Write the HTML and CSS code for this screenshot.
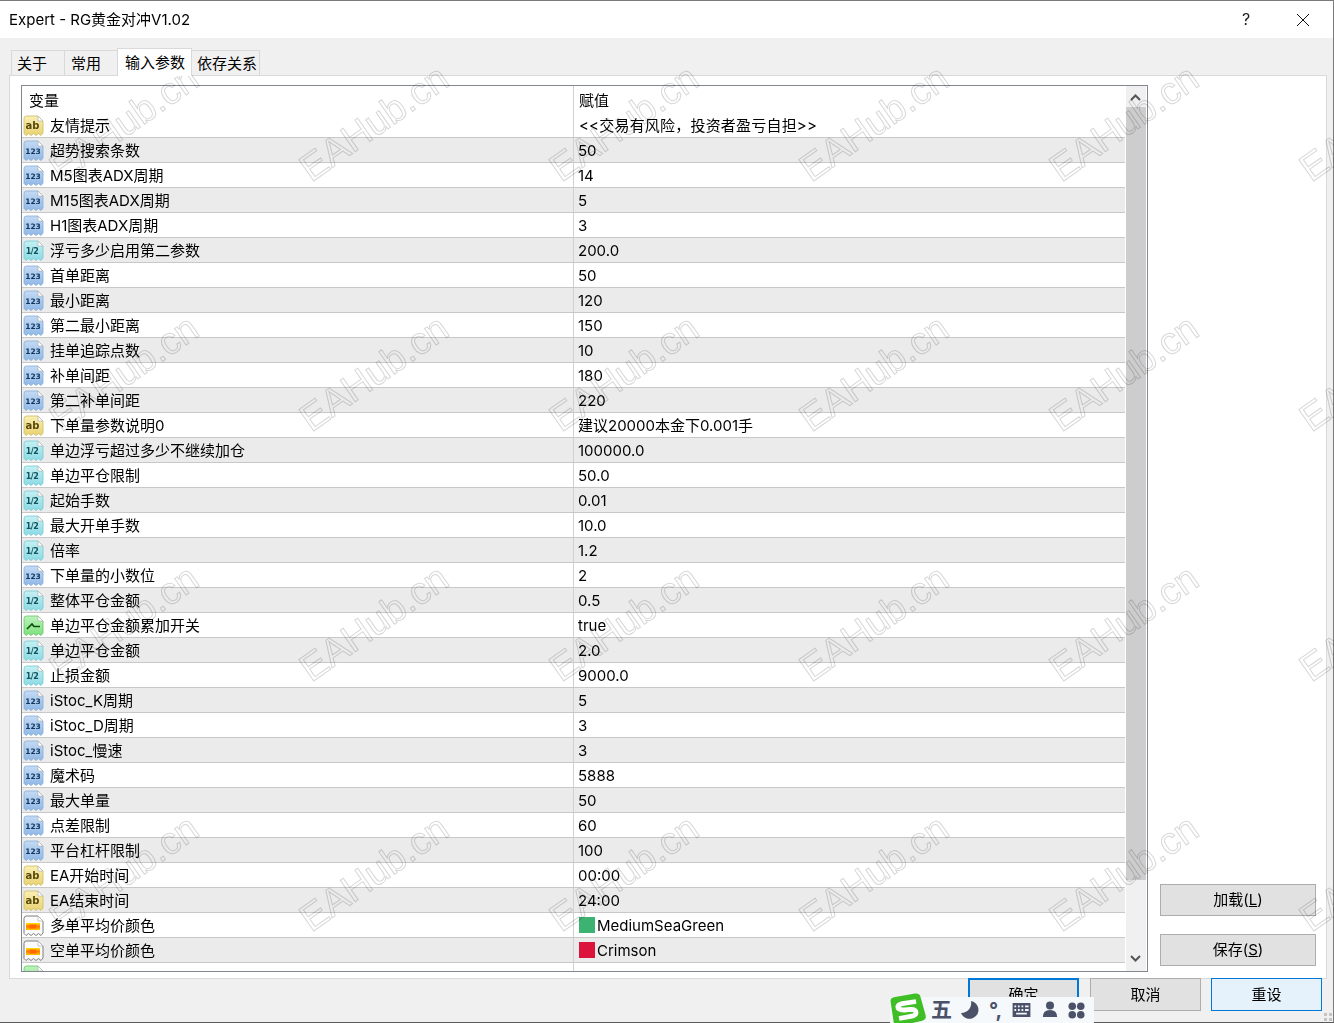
FILE: index.html
```html
<!DOCTYPE html>
<html lang="zh">
<head>
<meta charset="utf-8">
<title>Expert - RG黄金对冲V1.02</title>
<link rel="stylesheet" href="styles.css">
</head>
<body>
<svg class="defs" width="0" height="0" aria-hidden="true">
  <defs>
    <linearGradient id="g-ab" x1="0" y1="0" x2="0" y2="1"><stop offset="0" stop-color="#faf0b4"/><stop offset="1" stop-color="#e9d274"/></linearGradient>
    <linearGradient id="g-int" x1="0" y1="0" x2="0" y2="1"><stop offset="0" stop-color="#c4dbf5"/><stop offset="1" stop-color="#8fb8e6"/></linearGradient>
    <linearGradient id="g-dbl" x1="0" y1="0" x2="0" y2="1"><stop offset="0" stop-color="#c6f0f3"/><stop offset="1" stop-color="#8adbe4"/></linearGradient>
    <linearGradient id="g-bool" x1="0" y1="0" x2="0" y2="1"><stop offset="0" stop-color="#bdf3bd"/><stop offset="1" stop-color="#7ce07c"/></linearGradient>
    <linearGradient id="g-col" x1="0" y1="0" x2="0" y2="1"><stop offset="0" stop-color="#ffe600"/><stop offset=".5" stop-color="#ff7a00"/><stop offset="1" stop-color="#ffc800"/></linearGradient>
    <path id="doc" d="M1 4.5Q1 2 3.5 2H15L20 7V19L18 21.5 15.5 19.5 13 21.5 10.5 19.5 8 21.5 5.5 19.5 3 21.5 1 19.5Z"/>
    <symbol id="i-ab" viewBox="0 0 21 22"><use href="#doc" class="ic-ab"/><path d="M15 2V7H20Z" class="ic-fold"/><text x="9.5" y="14.5" class="ic-t ic-t-ab">ab</text></symbol>
    <symbol id="i-int" viewBox="0 0 21 22"><use href="#doc" class="ic-int"/><path d="M15 2V7H20Z" class="ic-fold"/><text x="10" y="14.5" class="ic-t ic-t-int">123</text></symbol>
    <symbol id="i-dbl" viewBox="0 0 21 22"><use href="#doc" class="ic-dbl"/><path d="M15 2V7H20Z" class="ic-fold"/><text x="9" y="14.5" class="ic-t ic-t-dbl">1/2</text></symbol>
    <symbol id="i-bool" viewBox="0 0 21 22"><use href="#doc" class="ic-bool"/><path d="M15 2V7H20Z" class="ic-fold"/><path d="M4 15 9 10 11 12.5 13 12.5H17" class="ic-line"/></symbol>
    <symbol id="i-col" viewBox="0 0 21 22"><use href="#doc" class="ic-col"/><path d="M15 2V7H20Z" class="ic-fold"/><rect x="3" y="9" width="14" height="7" class="ic-swatch"/><rect x="6.5" y="10.5" width="7" height="4" class="ic-swatch-in"/></symbol>
  </defs>
</svg>
<div class="window">
  <header class="titlebar">
    <span class="title">Expert - RG黄金对冲V1.02</span>
    <span class="help">?</span>
    <svg class="close" width="14" height="14" viewBox="0 0 14 14"><path d="M1 1 13 13M13 1 1 13"/></svg>
  </header>
  <nav class="tabs">
    <span class="tab tab-first">关于</span>
    <span class="tab tab-second">常用</span>
    <span class="tab tab-active">输入参数</span>
    <span class="tab tab-last">依存关系</span>
  </nav>
  <main class="panel">
    <section class="grid">
      <div class="list">
        <div class="head"><span class="col-name">变量</span><span class="col-val">赋值</span></div>
        <div class="row"><span class="col-name"><svg class="icon"><use href="#i-ab"/></svg>友情提示</span><span class="col-val col-text">&lt;&lt;交易有风险，投资者盈亏自担&gt;&gt;</span></div>
        <div class="row alt"><span class="col-name"><svg class="icon"><use href="#i-int"/></svg>超势搜索条数</span><span class="col-val">50</span></div>
        <div class="row"><span class="col-name"><svg class="icon"><use href="#i-int"/></svg>M5图表ADX周期</span><span class="col-val">14</span></div>
        <div class="row alt"><span class="col-name"><svg class="icon"><use href="#i-int"/></svg>M15图表ADX周期</span><span class="col-val">5</span></div>
        <div class="row"><span class="col-name"><svg class="icon"><use href="#i-int"/></svg>H1图表ADX周期</span><span class="col-val">3</span></div>
        <div class="row alt"><span class="col-name"><svg class="icon"><use href="#i-dbl"/></svg>浮亏多少启用第二参数</span><span class="col-val">200.0</span></div>
        <div class="row"><span class="col-name"><svg class="icon"><use href="#i-int"/></svg>首单距离</span><span class="col-val">50</span></div>
        <div class="row alt"><span class="col-name"><svg class="icon"><use href="#i-int"/></svg>最小距离</span><span class="col-val">120</span></div>
        <div class="row"><span class="col-name"><svg class="icon"><use href="#i-int"/></svg>第二最小距离</span><span class="col-val">150</span></div>
        <div class="row alt"><span class="col-name"><svg class="icon"><use href="#i-int"/></svg>挂单追踪点数</span><span class="col-val">10</span></div>
        <div class="row"><span class="col-name"><svg class="icon"><use href="#i-int"/></svg>补单间距</span><span class="col-val">180</span></div>
        <div class="row alt"><span class="col-name"><svg class="icon"><use href="#i-int"/></svg>第二补单间距</span><span class="col-val">220</span></div>
        <div class="row"><span class="col-name"><svg class="icon"><use href="#i-ab"/></svg>下单量参数说明0</span><span class="col-val">建议20000本金下0.001手</span></div>
        <div class="row alt"><span class="col-name"><svg class="icon"><use href="#i-dbl"/></svg>单边浮亏超过多少不继续加仓</span><span class="col-val">100000.0</span></div>
        <div class="row"><span class="col-name"><svg class="icon"><use href="#i-dbl"/></svg>单边平仓限制</span><span class="col-val">50.0</span></div>
        <div class="row alt"><span class="col-name"><svg class="icon"><use href="#i-dbl"/></svg>起始手数</span><span class="col-val">0.01</span></div>
        <div class="row"><span class="col-name"><svg class="icon"><use href="#i-dbl"/></svg>最大开单手数</span><span class="col-val">10.0</span></div>
        <div class="row alt"><span class="col-name"><svg class="icon"><use href="#i-dbl"/></svg>倍率</span><span class="col-val">1.2</span></div>
        <div class="row"><span class="col-name"><svg class="icon"><use href="#i-int"/></svg>下单量的小数位</span><span class="col-val">2</span></div>
        <div class="row alt"><span class="col-name"><svg class="icon"><use href="#i-dbl"/></svg>整体平仓金额</span><span class="col-val">0.5</span></div>
        <div class="row"><span class="col-name"><svg class="icon"><use href="#i-bool"/></svg>单边平仓金额累加开关</span><span class="col-val">true</span></div>
        <div class="row alt"><span class="col-name"><svg class="icon"><use href="#i-dbl"/></svg>单边平仓金额</span><span class="col-val">2.0</span></div>
        <div class="row"><span class="col-name"><svg class="icon"><use href="#i-dbl"/></svg>止损金额</span><span class="col-val">9000.0</span></div>
        <div class="row alt"><span class="col-name"><svg class="icon"><use href="#i-int"/></svg>iStoc_K周期</span><span class="col-val">5</span></div>
        <div class="row"><span class="col-name"><svg class="icon"><use href="#i-int"/></svg>iStoc_D周期</span><span class="col-val">3</span></div>
        <div class="row alt"><span class="col-name"><svg class="icon"><use href="#i-int"/></svg>iStoc_慢速</span><span class="col-val">3</span></div>
        <div class="row"><span class="col-name"><svg class="icon"><use href="#i-int"/></svg>魔术码</span><span class="col-val">5888</span></div>
        <div class="row alt"><span class="col-name"><svg class="icon"><use href="#i-int"/></svg>最大单量</span><span class="col-val">50</span></div>
        <div class="row"><span class="col-name"><svg class="icon"><use href="#i-int"/></svg>点差限制</span><span class="col-val">60</span></div>
        <div class="row alt"><span class="col-name"><svg class="icon"><use href="#i-int"/></svg>平台杠杆限制</span><span class="col-val">100</span></div>
        <div class="row"><span class="col-name"><svg class="icon"><use href="#i-ab"/></svg>EA开始时间</span><span class="col-val">00:00</span></div>
        <div class="row alt"><span class="col-name"><svg class="icon"><use href="#i-ab"/></svg>EA结束时间</span><span class="col-val">24:00</span></div>
        <div class="row"><span class="col-name"><svg class="icon"><use href="#i-col"/></svg>多单平均价颜色</span><span class="col-val"><i class="swatch swatch-green"></i>MediumSeaGreen</span></div>
        <div class="row alt"><span class="col-name"><svg class="icon"><use href="#i-col"/></svg>空单平均价颜色</span><span class="col-val"><i class="swatch swatch-red"></i>Crimson</span></div>
        <div class="row"><span class="col-name"><svg class="icon"><use href="#i-bool"/></svg></span><span class="col-val"></span></div>
      </div>
      <div class="scrollbar">
        <svg class="arrow" width="11" height="7" viewBox="0 0 11 7"><path d="M1 6 5.5 1.5 10 6"/></svg>
        <div class="thumb"></div>
        <svg class="arrow arrow-down" width="11" height="7" viewBox="0 0 11 7"><path d="M1 1 5.5 5.5 10 1"/></svg>
      </div>
    </section>
    <aside class="side">
      <button class="btn btn-side">加载(<u>L</u>)</button>
      <button class="btn btn-side">保存(<u>S</u>)</button>
    </aside>
  </main>
  <footer class="footer">
    <button class="btn btn-foot btn-default">确定</button>
    <button class="btn btn-foot">取消</button>
    <button class="btn btn-foot btn-focus">重设</button>
  </footer>
</div>
<div class="watermarks" aria-hidden="true">
  <span>EAHub.cn</span><span>EAHub.cn</span><span>EAHub.cn</span><span>EAHub.cn</span><span>EAHub.cn</span><span>EAHub.cn</span>
  <span>EAHub.cn</span><span>EAHub.cn</span><span>EAHub.cn</span><span>EAHub.cn</span><span>EAHub.cn</span><span>EAHub.cn</span>
  <span>EAHub.cn</span><span>EAHub.cn</span><span>EAHub.cn</span><span>EAHub.cn</span><span>EAHub.cn</span><span>EAHub.cn</span>
  <span>EAHub.cn</span><span>EAHub.cn</span><span>EAHub.cn</span><span>EAHub.cn</span><span>EAHub.cn</span><span>EAHub.cn</span>
</div>
<div class="ime">
  <svg class="ime-logo" width="41" height="34" viewBox="0 0 38 32"><path d="M4 8Q3.500 5 7 4L27 0.500Q31 0 32 3L37 21Q38 25 34 26L12 31Q8 32 7 28Z" class="logo-bg"/><path d="M28 8 15 10Q10 11 11 14 12 16 17 16L23 15.500Q28 15.500 28 18.500 28 21 23 22L12 24" class="logo-s"/></svg>
  <span class="ime-wu">五</span>
  <svg class="ime-ic" width="20" height="20" viewBox="0 0 20 20"><path d="M12 1A9 9 0 1 1 2 13 10 10 0 0 0 12 1Z"/></svg>
  <span class="ime-punct">°,</span>
  <svg class="ime-ic" width="21" height="16" viewBox="0 0 22 18"><path d="M1 1H21V17H1ZM3 4V6H5V4ZM7 4V6H9V4ZM11 4V6H13V4ZM15 4V6H19V4ZM3 8V10H5V8ZM7 8V10H9V8ZM11 8V10H13V8ZM15 8V10H19V8ZM5 12V14H17V12Z" fill-rule="evenodd"/></svg>
  <svg class="ime-ic" width="16" height="18" viewBox="0 0 18 20"><circle cx="9" cy="5" r="4.500"/><path d="M1 18Q1 10 9 10T17 18Z"/></svg>
  <svg class="ime-ic" width="17" height="17" viewBox="0 0 18 18"><circle cx="4.500" cy="4.500" r="4"/><circle cx="13.500" cy="4.500" r="4"/><circle cx="4.500" cy="13.500" r="4"/><circle cx="13.500" cy="13.500" r="4"/></svg>
</div>
<div class="grip" aria-hidden="true"><i></i><i></i><i></i><i></i></div>
</body>
</html>
```
FILE: styles.css
```css
* { box-sizing: border-box; }
html, body { margin: 0; height: 1023px; overflow: hidden; }
body {
  position: relative;
  background: #f0f0f0;
  color: #000;
  font: 15px/20px "Inter", "Noto Sans CJK SC", sans-serif;
}
.defs { position: absolute; }
.window {
  height: 1023px;
  display: flex;
  flex-direction: column;
  border-top: 1px solid #7a7a7a;
  border-right: 1px solid #7a7a7a;
  border-bottom: 1px solid #5a5a5a;
}
.titlebar {
  height: 37px;
  flex: none;
  background: #fff;
  display: flex;
  align-items: center;
  padding: 0 23px 0 9px;
}
.title { flex: 1; }
.help { width: 54px; color: #222; font-size: 16px; margin-bottom: 2px; }
.close { fill: none; stroke: #111; stroke-width: 1; }
.tabs {
  height: 37px;
  flex: none;
  display: flex;
  align-items: flex-end;
  padding-left: 11px;
  position: relative;
  z-index: 1;
}
.tab {
  width: 53px;
  height: 25px;
  background: #f0f0f0;
  border: 1px solid #d9d9d9;
  border-bottom: 0;
  border-right: 0;
  line-height: 25px;
}
.tab-first { padding-left: 5px; }
.tab-second { padding-left: 6px; }
.tab-active {
  width: 75px;
  height: 28px;
  margin-bottom: -1px;
  background: #fff;
  border-right: 1px solid #d9d9d9;
  padding-left: 7px;
  line-height: 27px;
}
.tab-last { width: 68px; border-left: 0; border-right: 1px solid #d9d9d9; padding-left: 5px; }
.panel {
  width: 1318px;
  height: 904px;
  margin-left: 9px;
  flex: none;
  background: #fff;
  border: 1px solid #d9d9d9;
  padding: 9px 10px 6px 11px;
  display: flex;
}
.grid {
  width: 1127px;
  border: 1px solid #828790;
  display: flex;
  overflow: hidden;
}
.list { width: 1103px; flex: none; overflow: hidden; }
.head, .row { display: flex; height: 25px; }
.head { height: 27px; }
.col-name {
  width: 551px;
  flex: none;
  display: flex;
  align-items: center;
  padding: 2px 0 0 1px;
  white-space: nowrap;
}
.col-val {
  flex: 1;
  display: flex;
  align-items: center;
  padding: 2px 0 0 4px;
  border-left: 1px solid #d0d0d0;
  white-space: nowrap;
}
.head .col-name { padding-left: 7px; }
.head .col-val { padding-left: 5px; }
.col-text { padding-left: 5px; letter-spacing: .2px; }
.row { border-bottom: 1px solid #c8c8c8; }
.alt { background: #ebebeb; }
.icon { width: 21px; height: 22px; margin: -2px 6px 0 0; flex: none; }
.ic-ab { fill: url(#g-ab); stroke: #cdbb62; stroke-width: .8; }
.ic-int { fill: url(#g-int); stroke: #86acd8; stroke-width: .8; }
.ic-dbl { fill: url(#g-dbl); stroke: #74c8d4; stroke-width: .8; }
.ic-bool { fill: url(#g-bool); stroke: #66c466; stroke-width: .8; }
.ic-col { fill: #fbfbfb; stroke: #7f7f7f; stroke-width: 1; }
.ic-fold { fill: #fff; stroke: #a9a9a9; stroke-width: .6; }
.ic-t { font: bold 7.5px "DejaVu Sans", sans-serif; text-anchor: middle; }
.ic-t-ab { font-size: 10px; fill: #57480c; }
.ic-t-int { fill: #12355e; }
.ic-t-dbl { font-size: 8px; letter-spacing: -.6px; fill: #13525e; }
.ic-line { fill: none; stroke: #0d4f0d; stroke-width: 1.7; }
.ic-swatch { fill: url(#g-col); }
.ic-swatch-in { fill: #ff6a00; }
.swatch { width: 16px; height: 16px; margin: -2px 2px 0 1px; flex: none; }
.swatch-green { background: #3cb371; }
.swatch-red { background: #dc143c; }
.scrollbar {
  width: 20px;
  margin-left: 1px;
  background: #f0f0f0;
  display: flex;
  flex-direction: column;
  align-items: center;
  padding: 8px 0 9px;
}
.arrow { fill: none; stroke: #555; stroke-width: 2; flex: none; margin-right: 1px; }
.thumb { width: 100%; height: 773px; margin: 6px 0 0; background: #cdcdcd; flex: none; }
.arrow-down { margin-top: auto; }
.side {
  flex: 1;
  padding: 799px 0 0 12px;
  display: flex;
  flex-direction: column;
  gap: 18px;
}
.btn {
  font: inherit;
  color: #000;
  background: #e1e1e1;
  border: 1px solid #adadad;
  padding: 0;
}
.btn-side { width: 156px; height: 32px; }
.footer {
  flex: 1;
  display: flex;
  justify-content: flex-end;
  gap: 10px;
  padding-right: 11px;
  margin-top: -1px;
  position: relative;
}
.btn-foot { width: 111px; height: 33px; }
.btn-foot:first-child { margin-right: 1px; }
.btn-default { border: 2px solid #0078d7; }
.btn-focus { background: #e5f1fb; border-color: #0078d7; }
.watermarks {
  position: absolute;
  left: 0;
  top: 0;
  width: 1334px;
  height: 1023px;
  padding: 65px 0 0 47px;
  overflow: hidden;
  display: grid;
  grid-template-columns: repeat(6, 250px);
  grid-auto-rows: 250px;
  pointer-events: none;
  mix-blend-mode: multiply;
}
.watermarks span {
  width: 153px;
  height: 115px;
  display: flex;
  align-items: center;
  justify-content: center;
  white-space: nowrap;
  font: 38px/1 "Liberation Sans", sans-serif;
  color: transparent;
  -webkit-text-stroke: 1px #d8d8d8;
  transform: rotate(-35deg);
}
.ime {
  position: absolute;
  left: 890px;
  top: 997px;
  width: 204px;
  height: 26px;
  padding-left: 41px;
  background: #f5f9fb;
  display: flex;
  align-items: center;
  gap: 10px;
  color: #4a5168;
}
.ime-logo { position: absolute; left: -4px; top: -4px; }
.logo-bg { fill: #3fbf25; }
.logo-s { fill: none; stroke: #fff; stroke-width: 4.5; }
.ime-wu { font-size: 21px; font-weight: 700; margin-right: -3px; }
.ime-punct { font-size: 20px; font-weight: 700; width: 12px; }
.ime-ic { fill: #4a5168; flex: none; }
.grip {
  position: absolute;
  right: 2px;
  bottom: 2px;
  display: grid;
  grid-template-columns: 3px 3px;
  gap: 2px;
}
.grip i { width: 3px; height: 3px; background: #c4c4c4; }
```
